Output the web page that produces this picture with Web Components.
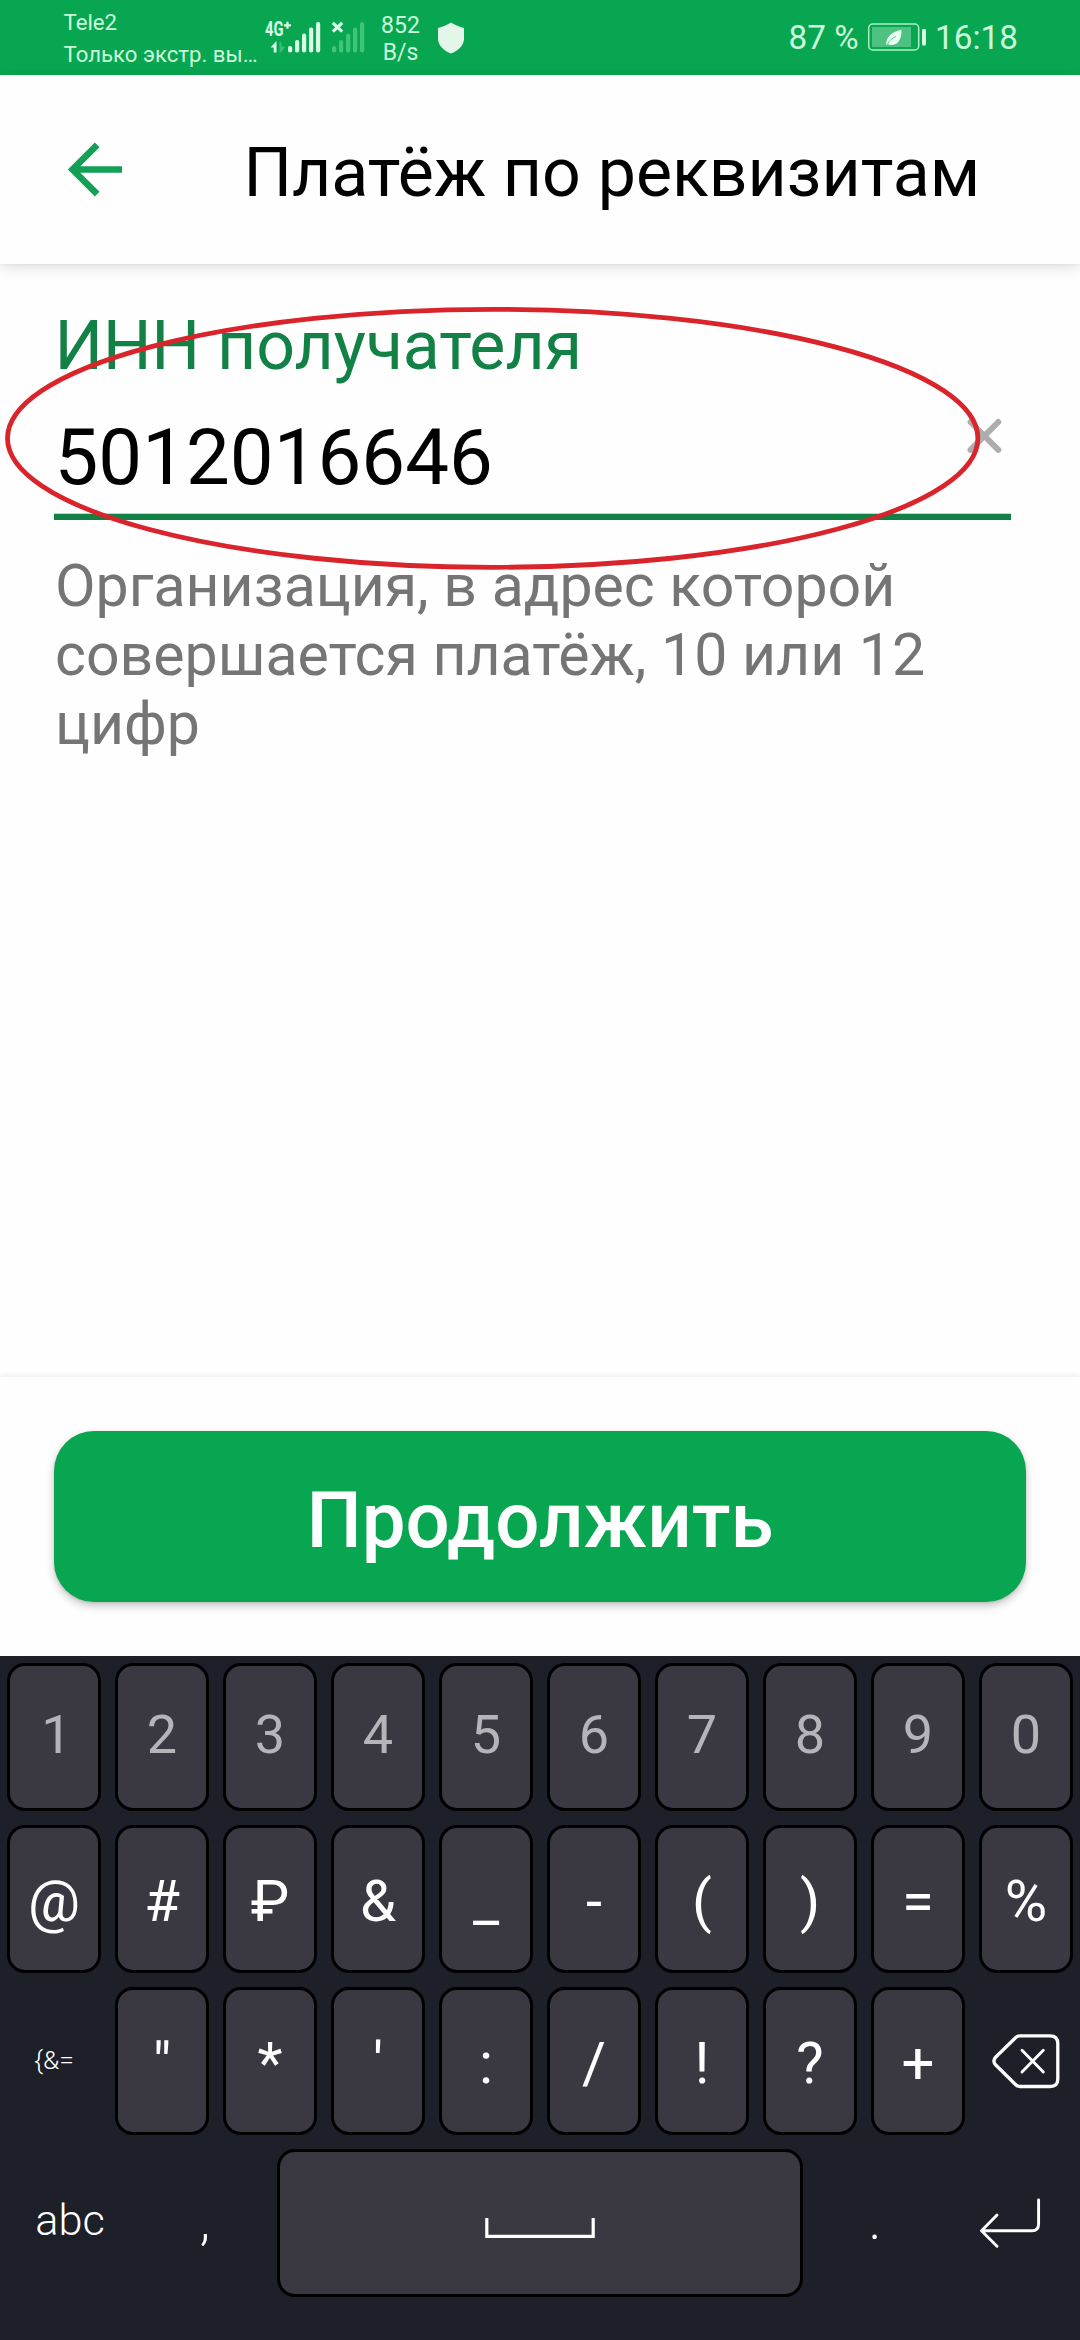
<!DOCTYPE html>
<html lang="ru">
<head>
<meta charset="utf-8">
<title>Платёж по реквизитам</title>
<style>
  html, body { margin: 0; padding: 0; background: #fefefe; }
  body { width: 1080px; height: 2340px; overflow: hidden; font-family: Roboto, "Noto Sans", sans-serif; }
</style>
</head>
<body>
<payment-screen></payment-screen>

<script>
const define = (name, html) => customElements.define(name, class extends HTMLElement {
  constructor() {
    super();
    const tpl = document.createElement('template');
    tpl.innerHTML = html;
    this.attachShadow({ mode: 'open' }).append(tpl.content.cloneNode(true));
  }
});

/* System status bar: carrier, signal, traffic, battery, clock */
define('status-bar', `
<style>
  :host { display: flex; height: 75px; box-sizing: border-box; padding: 0 62px 0 63.500px; background: #09a651; color: #c9fbdc; white-space: pre; }
  .carrier { width: 201.500px; padding-top: 7px; font-size: 22.2px; line-height: 31.7px; }
  .net { flex: none; display: block; }
  .speed { width: 44px; margin-left: 11.500px; padding-top: 12px; font-size: 23px; line-height: 27px; text-align: center; }
  .shield { margin: 22px 0 0 14.500px; flex: none; height: 32px; width: 28px; }
  .right { margin-left: auto; display: flex; font-size: 33.3px; line-height: 40px; padding-top: 18px; }
  .battery { display: block; margin: 5px 9.500px 0 9px; }
</style>
<div class="carrier"><div>Tele2</div><div>Только экстр. вы…</div></div>
<svg class="net" width="102" height="75" viewBox="265 0 102 75">
  <g fill="#d6ffe6">
    <text x="265" y="36" font-size="19.5" font-weight="700" textLength="18.5" lengthAdjust="spacingAndGlyphs">4G</text>
    <path d="M284 25.3h7M287.500 21.800v7" stroke="#d6ffe6" stroke-width="2.200"/>
    <path d="M276.500 41v11.500h-2.800V47.500H270.500z"/>
    <path d="M279.500 42v10.500h1.600L285 47l-3.700-.800V42z" opacity=".25"/>
    <rect x="288" y="46" width="4.200" height="6.500" rx="2"/>
    <rect x="295" y="40" width="4.200" height="12.500" rx="2"/>
    <rect x="302" y="33.500" width="4.200" height="19" rx="2"/>
    <rect x="309" y="27.500" width="4.200" height="25" rx="2"/>
    <rect x="316" y="22" width="4.200" height="30.500" rx="2"/>
  </g>
  <path d="M332.800 22.800l9.400 8.800M342.200 22.800l-9.400 8.800" stroke="#d6ffe6" stroke-width="3.200" fill="none"/>
  <g fill="#3fc57a">
    <rect x="332" y="46" width="4.200" height="6.500" rx="2"/>
    <rect x="339" y="40" width="4.200" height="12.500" rx="2"/>
    <rect x="346" y="33.500" width="4.200" height="19" rx="2"/>
    <rect x="353" y="27.500" width="4.200" height="25" rx="2"/>
    <rect x="360" y="22" width="4.200" height="30.500" rx="2"/>
  </g>
</svg>
<div class="speed"><div>852</div><div>B/s</div></div>
<svg class="shield" viewBox="0 0 28 32"><path d="M14 .500C18 3 22.500 5 27 6V17.500C26.500 24 20.500 29 14 31.500C7.500 29 1.500 24 1 17.500V6C5.500 5 10 3 14 .500z" fill="#e2f6ea"/></svg>
<div class="right">
  <span>87 %</span>
  <svg class="battery" width="58" height="28" viewBox="867 23.500 58 28">
    <rect x="867.700" y="24.500" width="50" height="26" rx="4" fill="none" stroke="#a8f2c6" stroke-width="1.500"/>
    <rect x="871" y="27.500" width="39" height="20" fill="#4dc283"/>
    <rect x="921" y="29.300" width="4" height="17" rx="1.800" fill="#d6ffe6"/>
    <path d="M900.300 30.200C901 36 899 45.300 890.500 45.500C888.700 45.500 887.700 45 887 44.200L885.900 45.600L885.200 44.500C885.600 37 890 33 900.300 30.200z" fill="#eafff2"/>
    <path d="M886.500 44.500C888.500 41 891 38.800 895 37" stroke="#4dc283" stroke-width=".9" fill="none"/>
  </svg>
  <span>16:18</span>
</div>`);

/* White title bar with a back arrow */
define('app-header', `
<style>
  :host { display: flex; height: 189px; box-sizing: border-box; padding: 58px 0 0 67px; background: #fefefe; position: relative; z-index: 1;
    box-shadow: 0 3px 14px rgba(0,0,0,.13), 0 1px 2px rgba(0,0,0,.04); }
  svg { display: block; margin-top: 8px; flex: none; }
  h1 { margin: 0 0 0 120.500px; font-size: 68px; line-height: 80px; font-weight: 400; color: #000; white-space: nowrap; }
</style>
<svg width="56" height="57" viewBox="67 141 56 57"><path d="M122 169.500H72M97.200 144.800L72.500 169.500L97.200 194.200" fill="none" stroke="#12a154" stroke-width="6.600"/></svg>
<h1><slot></slot></h1>`);

/* Labelled input with clear button, underline and helper text */
define('text-field', `
<style>
  :host { display: block; box-sizing: border-box; padding: 42px 69px 0 54px; position: relative; }
  .label { font-size: 68px; line-height: 80px; color: #118145; padding-left: .500px; }
  .row { display: flex; margin-top: 26px; padding-bottom: 11px; height: 91px; border-bottom: 6px solid #118145; justify-content: space-between; box-shadow: inset 0 -1px 0 #b9dcc8; }
  .value { font-size: 78px; line-height: 91px; color: #000; padding-left: .500px; }
  .clear { display: block; margin: 6px 9.500px 0 0; }
  .hint { margin-top: 31px; font-size: 59px; line-height: 69px; color: #757575; padding-left: 1px; }
  .mark { position: absolute; left: 0; top: 36px; display: block; }
</style>
<div class="label"><slot name="label"></slot></div>
<div class="row">
  <div class="value"><slot name="value"></slot></div>
  <svg class="clear" width="35" height="35" viewBox="966 418 35 35"><path d="M969.500 422L997.300 449.800M997.300 422L969.500 449.800" stroke="#adadad" stroke-width="6" stroke-linecap="round"/></svg>
</div>
<div class="hint"><slot name="hint"></slot></div>
<svg class="mark" width="990" height="280" viewBox="0 300 990 280"><ellipse cx="492.700" cy="438.300" rx="485.200" ry="129" fill="none" stroke="#d9242b" stroke-width="4.800"/></svg>`);

define('action-bar', `
<style>
  :host { display: block; height: 279px; box-sizing: border-box; padding: 54px; background: #fefefe; box-shadow: 0 -1px 6px rgba(0,0,0,.08); }
  button { display: block; width: 972px; height: 171px; box-sizing: border-box; border: 0; border-radius: 40px; padding: 8px 0 0; background: #09a651; color: #fff;
    font: 500 78px/91px Roboto, "Noto Sans", sans-serif; box-shadow: 0 4px 9px rgba(0,0,0,.22), 0 1px 3px rgba(0,0,0,.1); }
</style>
<button><slot></slot></button>`);

define('key-cap', `
<style>
  :host { display: block; width: 94px; height: 148px; box-sizing: border-box; flex: none; border: 3px solid #000; border-radius: 18px; background: #3a3942;
    color: #fff; font-size: 58px; line-height: 68px; text-align: center; padding-top: 39px; }
  :host([kind=digit]) { color: #b4b4b9; font-size: 54px; line-height: 63px; padding-top: 37px; }
  :host([kind=digit]:first-child) { text-indent: 5px; }
  :host([kind=plain]) { border: 0; background: none; padding-top: 0; font-weight: 300; }
  :host([kind=space]) { width: 526px; padding-top: 65px; }
  :host([wide]) { width: 126px; }
  :host([mid]) { width: 116px; font-size: 54px; line-height: 63px; padding-top: 40px !important; }
</style>
<slot></slot>`);

define('key-board', `
<style>
  :host { display: flex; flex-direction: column; gap: 14px; box-sizing: border-box; height: 684px; padding: 7px; background: #1d1f29; }
  .row { display: flex; gap: 14px; }
  svg { display: block; margin: 0 auto; }
  .alt { font-size: 26.500px; line-height: 32px; padding-top: 56.500px; }
  .abc { font-size: 43.300px; line-height: 50px; padding-top: 47px; }
</style>
<div class="row" id="digits"></div>
<div class="row" id="symbols"></div>
<div class="row">
  <key-cap kind="plain"><div class="alt">{&amp;=</div></key-cap>
  <key-cap>"</key-cap><key-cap>*</key-cap><key-cap>'</key-cap><key-cap>:</key-cap><key-cap>/</key-cap><key-cap>!</key-cap><key-cap>?</key-cap><key-cap>+</key-cap>
  <key-cap kind="plain"><svg width="94" height="148" viewBox="979 1987 94 148" fill="none" stroke="#fff" stroke-linecap="round" stroke-linejoin="round">
    <path d="M1020 2035.800H1050Q1057.800 2035.800 1057.800 2043.500V2079Q1057.800 2086.500 1050 2086.500H1020Q1017.500 2086.500 1015.500 2084.500L995.800 2065Q992 2061 995.800 2057L1015.500 2037.700Q1017.500 2035.800 1020 2035.800z" stroke-width="3.300"/>
    <path d="M1022 2050.200L1043.300 2072M1043.300 2050.200L1022 2072" stroke-width="2.900"/>
  </svg></key-cap>
</div>
<div class="row">
  <key-cap kind="plain" wide><div class="abc">abc</div></key-cap>
  <key-cap kind="plain" mid>,</key-cap>
  <key-cap kind="space"><svg width="110" height="22" viewBox="0 0 110 22"><path d="M1.800 1V19.300H108.200V1" fill="none" stroke="#fff" stroke-width="3.200"/></svg></key-cap>
  <key-cap kind="plain" mid>.</key-cap>
  <key-cap kind="plain" wide><svg width="126" height="148" viewBox="947 2149 126 148" fill="none" stroke="#fff" stroke-width="2.900" stroke-linecap="round" stroke-linejoin="round">
    <path d="M1038.600 2200V2224Q1038.600 2230.800 1032 2230.800H982M997 2215L981.500 2230.800L997 2246.300"/>
  </svg></key-cap>
</div>`);

define('payment-screen', `
<style>
  :host { display: flex; flex-direction: column; width: 1080px; height: 2340px; background: #fefefe; }
  text-field { flex: 1; }
</style>
<status-bar></status-bar>
<app-header>Платёж по реквизитам</app-header>
<text-field>
  <span slot="label">ИНН получателя</span>
  <span slot="value">5012016646</span>
  <span slot="hint">Организация, в адрес которой совершается платёж, 10 или 12 цифр</span>
</text-field>
<action-bar>Продолжить</action-bar>
<key-board></key-board>`);

const board = document.querySelector('payment-screen').shadowRoot.querySelector('key-board').shadowRoot;
const fill = (id, chars, kind) => {
  for (const ch of chars) {
    const key = document.createElement('key-cap');
    if (kind) key.setAttribute('kind', kind);
    key.textContent = ch;
    board.getElementById(id).append(key);
  }
};
fill('digits', '1234567890', 'digit');
fill('symbols', '@#₽&_-()=%');
</script>
</body>
</html>
